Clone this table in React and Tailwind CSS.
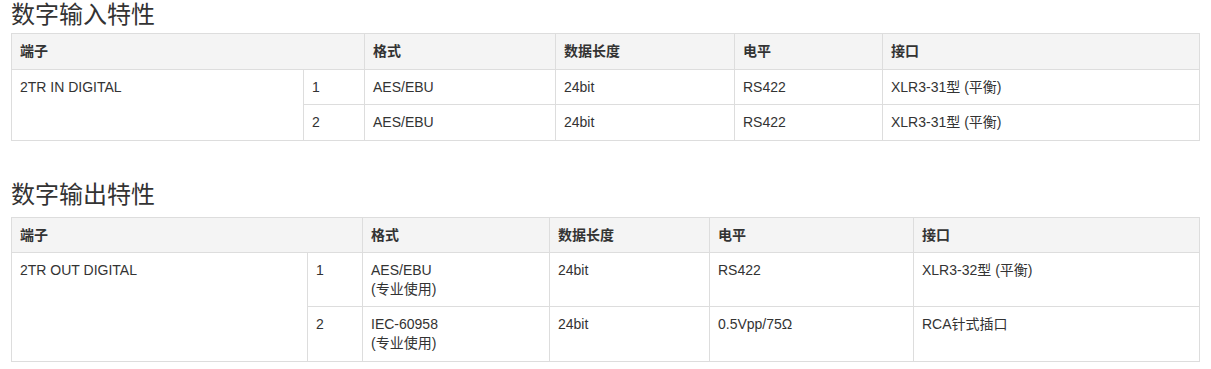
const font = { fontFamily: '"Liberation Sans", Arial, "Noto Sans CJK SC", sans-serif' };

const inputRows = [
  { n: "1", fmt: ["AES/EBU"], len: "24bit", lvl: "RS422", port: "XLR3-31型 (平衡)" },
  { n: "2", fmt: ["AES/EBU"], len: "24bit", lvl: "RS422", port: "XLR3-31型 (平衡)" },
];

const outputRows = [
  { n: "1", fmt: ["AES/EBU", "(专业使用)"], len: "24bit", lvl: "RS422", port: "XLR3-32型 (平衡)" },
  { n: "2", fmt: ["IEC-60958", "(专业使用)"], len: "24bit", lvl: "0.5Vpp/75Ω", port: "RCA针式插口" },
];

const td = "border border-[#dddddd] px-2 py-2 align-top";

function SpecTable({ terminal, rows, widths }) {
  return (
    <table className="w-[1188px] table-fixed border-collapse border border-[#dddddd] text-[14px] leading-[18.57px] text-[#333333]">
      <colgroup>
        {widths.map((w, i) => (
          <col key={i} style={{ width: w }} />
        ))}
      </colgroup>
      <thead>
        <tr className="bg-[#f4f4f4]">
          <th colSpan={2} className={td + " text-left font-bold"}>端子</th>
          <th className={td + " text-left font-bold"}>格式</th>
          <th className={td + " text-left font-bold"}>数据长度</th>
          <th className={td + " text-left font-bold"}>电平</th>
          <th className={td + " text-left font-bold"}>接口</th>
        </tr>
      </thead>
      <tbody>
        {rows.map((r, i) => (
          <tr key={i}>
            {i === 0 && (
              <td rowSpan={rows.length} className={td}>
                {terminal}
              </td>
            )}
            <td className={td}>{r.n}</td>
            <td className={td}>
              {r.fmt.map((f) => (
                <div key={f}>{f}</div>
              ))}
            </td>
            <td className={td}>{r.len}</td>
            <td className={td}>{r.lvl}</td>
            <td className={td}>{r.port}</td>
          </tr>
        ))}
      </tbody>
    </table>
  );
}

export default function App() {
  return (
    <div className="w-[1211px] h-[369px] bg-white px-[11px] overflow-hidden" style={font}>
      <h2 className="text-[24px] leading-[30px] text-[#333333] h-[33px]">数字输入特性</h2>
      <SpecTable
        terminal="2TR IN DIGITAL"
        rows={inputRows}
        widths={[292, 61, 191, 179, 148, 317]}
      />
      <h2 className="text-[24px] leading-[30px] text-[#333333] mt-[39px] h-[37px]">数字输出特性</h2>
      <SpecTable
        terminal="2TR OUT DIGITAL"
        rows={outputRows}
        widths={[296, 55, 187, 160, 204, 286]}
      />
    </div>
  );
}
